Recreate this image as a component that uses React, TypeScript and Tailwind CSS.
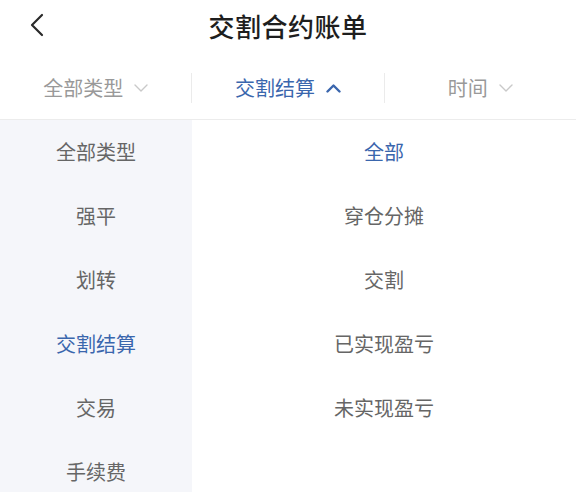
import React from "react";

const FONT = { fontFamily: '"Noto Sans CJK SC", "Noto Sans", sans-serif' };

const categories = ["全部类型", "强平", "划转", "交割结算", "交易", "手续费"];
const subTypes = ["全部", "穿仓分摊", "交割", "已实现盈亏", "未实现盈亏"];

function ChevronDown() {
  return (
    <svg width="14" height="8" viewBox="0 0 14 8" fill="none" className="ml-[11px]">
      <path d="M1 1l6 6 6-6" stroke="#c9c9c9" strokeWidth="1.4" strokeLinecap="round" strokeLinejoin="round" />
    </svg>
  );
}

function ChevronUp() {
  return (
    <svg width="15" height="9" viewBox="0 0 15 9" fill="none" className="ml-[11px]">
      <path d="M1.5 7.5l6-6 6 6" stroke="#3a66ad" strokeWidth="2.4" strokeLinecap="round" strokeLinejoin="round" />
    </svg>
  );
}

export default function App() {
  const activeCategory = "交割结算";
  const activeSub = "全部";

  return (
    <div className="w-[576px] h-[492px] overflow-hidden bg-white" style={FONT}>
      <div className="relative h-[50px] flex items-center justify-center">
        <svg width="14" height="24" viewBox="0 0 14 24" fill="none" className="absolute left-[30px] top-[13px]">
          <path d="M12 2L2 12l10 10" stroke="#2a2a2a" strokeWidth="2.2" strokeLinecap="round" strokeLinejoin="round" />
        </svg>
        <span className="text-[26px] font-medium text-[#1e1e1e] tracking-[0.5px]">交割合约账单</span>
      </div>

      <div className="h-[70px] pt-[7px] flex items-center border-b border-[#ececec]">
        <div className="flex-1 flex items-center justify-center">
          <span className="text-[20px] text-[#999999]">全部类型</span>
          <ChevronDown />
        </div>
        <div className="w-px h-[30px] bg-[#ebebeb]" />
        <div className="flex-1 flex items-center justify-center">
          <span className="text-[20px] text-[#3a66ad]">交割结算</span>
          <ChevronUp />
        </div>
        <div className="w-px h-[30px] bg-[#ebebeb]" />
        <div className="flex-1 flex items-center justify-center">
          <span className="text-[20px] text-[#999999]">时间</span>
          <ChevronDown />
        </div>
      </div>

      <div className="flex">
        <div className="w-[192px] bg-[#f5f6fa]">
          {categories.map((item) => (
            <div
              key={item}
              className={
                "h-[64px] flex items-center justify-center text-[20px] " +
                (item === activeCategory ? "text-[#3a66ad]" : "text-[#666666]")
              }
            >
              {item}
            </div>
          ))}
        </div>
        <div className="flex-1 bg-white">
          {subTypes.map((item) => (
            <div
              key={item}
              className={
                "h-[64px] flex items-center justify-center text-[20px] " +
                (item === activeSub ? "text-[#3a66ad]" : "text-[#666666]")
              }
            >
              {item}
            </div>
          ))}
        </div>
      </div>
    </div>
  );
}
